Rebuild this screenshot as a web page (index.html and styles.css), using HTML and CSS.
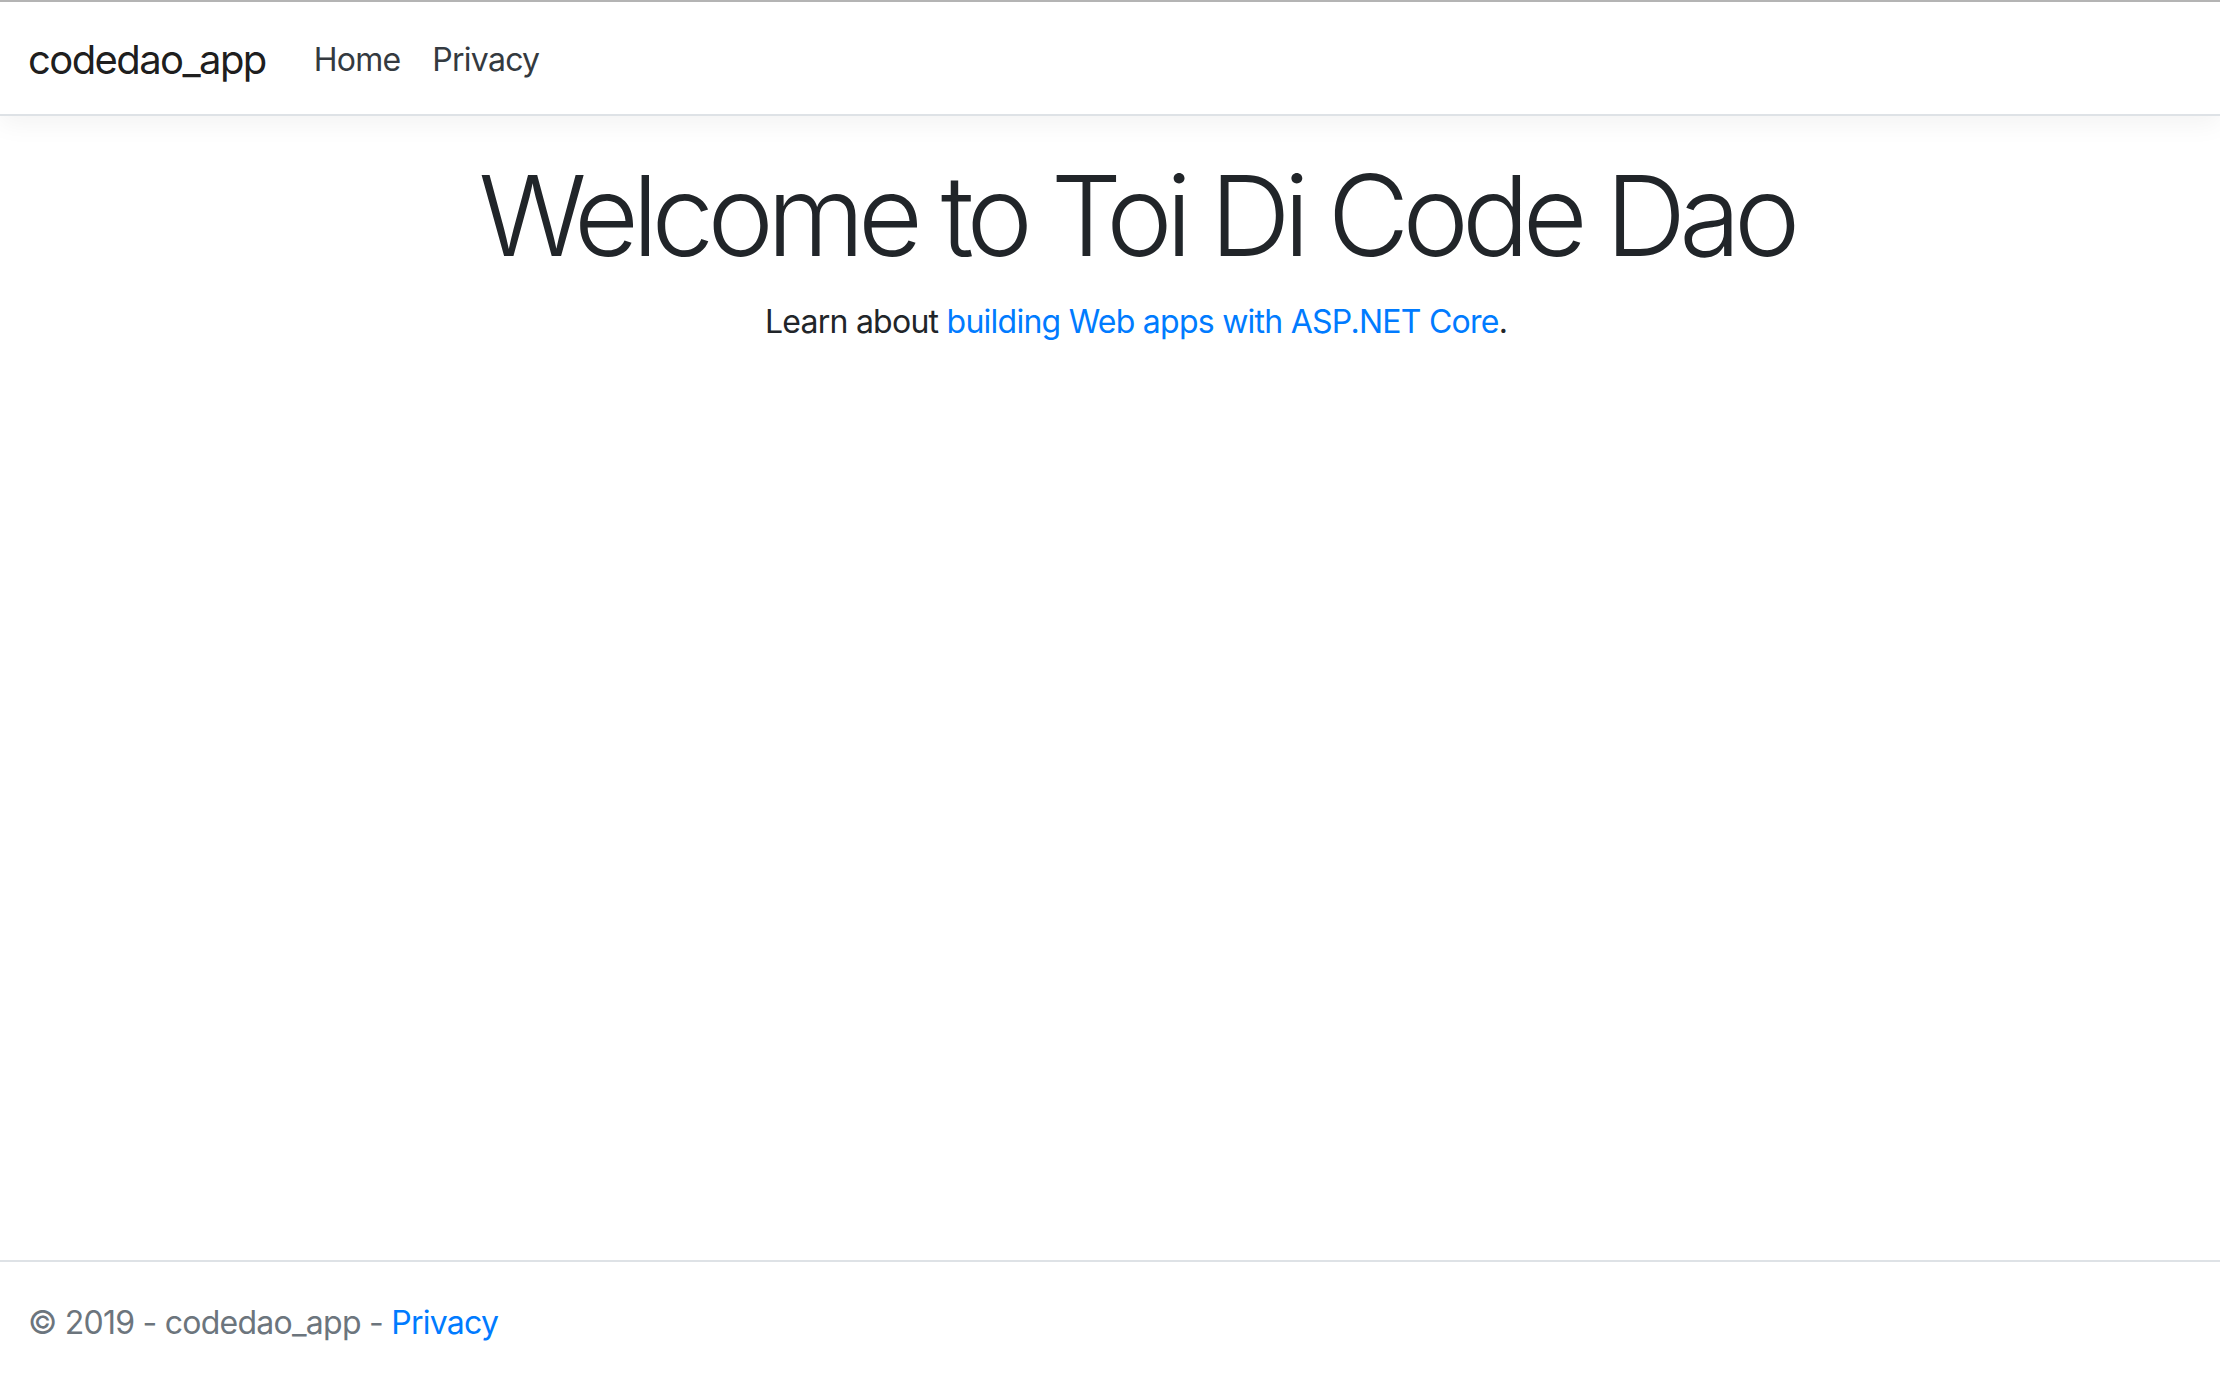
FILE: index.html
```html
<!DOCTYPE html>
<html lang="en">
  <head>
    <meta charset="UTF-8" />
    <meta name="viewport" content="width=device-width, initial-scale=1.0" />
    <title>Home Page - codedao_app</title>
    <link rel="stylesheet" href="styles.css">
  </head>
  <body>
    <header>
      <nav class="navbar">
        <a class="navbar-brand" href="#">codedao_app</a>
        <ul class="nav">
          <li><a class="nav-link" href="#">Home</a></li>
          <li><a class="nav-link" href="#">Privacy</a></li>
        </ul>
      </nav>
    </header>
    <main class="main">
      <div class="text-center">
        <h1 class="display-4">Welcome to Toi Di Code Dao</h1>
        <p>Learn about <a href="#">building Web apps with ASP.NET Core</a>.</p>
      </div>
    </main>
    <footer class="footer">
      &copy; 2019 - codedao_app - <a href="#">Privacy</a>
    </footer>
  </body>
</html>
```

FILE: styles.css
```css
html,
body {
  margin: 0;
  height: 100%;
}

body {
  font-family: Inter, "Liberation Sans", sans-serif;
  font-size: 32px;
  line-height: 1.5;
  letter-spacing: -0.75px;
  color: #212529;
  background-color: #fff;
  display: flex;
  flex-direction: column;
  border-top: 2px solid #b4b4b4;
  box-sizing: border-box;
}

a {
  color: #007bff;
  text-decoration: none;
}

.navbar {
  display: flex;
  align-items: center;
  padding: 18px 28px 14px;
  background-color: #fff;
  border-bottom: 2px solid #dee2e6;
  box-shadow: 0 8px 24px rgba(0, 0, 0, 0.05);
  margin-bottom: 32px;
}

.navbar-brand {
  font-size: 40px;
  line-height: 60px;
  padding: 10px 0;
  margin-right: 32px;
  letter-spacing: -1.6px;
  color: rgba(0, 0, 0, 0.9);
}

.nav {
  display: flex;
  list-style: none;
  margin: 0;
  padding: 0;
}

.nav-link {
  display: block;
  padding: 16px;
  color: #343a40;
}

.main {
  flex: 1;
  padding-left: 52px;
}

.text-center {
  text-align: center;
}

.display-4 {
  font-size: 112px;
  font-weight: 300;
  line-height: 1.2;
  margin: 0 0 16px;
  letter-spacing: -6.8px;
}

.text-center p {
  margin: 0;
}

.footer {
  border-top: 2px solid #dee2e6;
  line-height: 114px;
  padding: 4px 28px 0;
  color: #6c757d;
  white-space: nowrap;
}
```
